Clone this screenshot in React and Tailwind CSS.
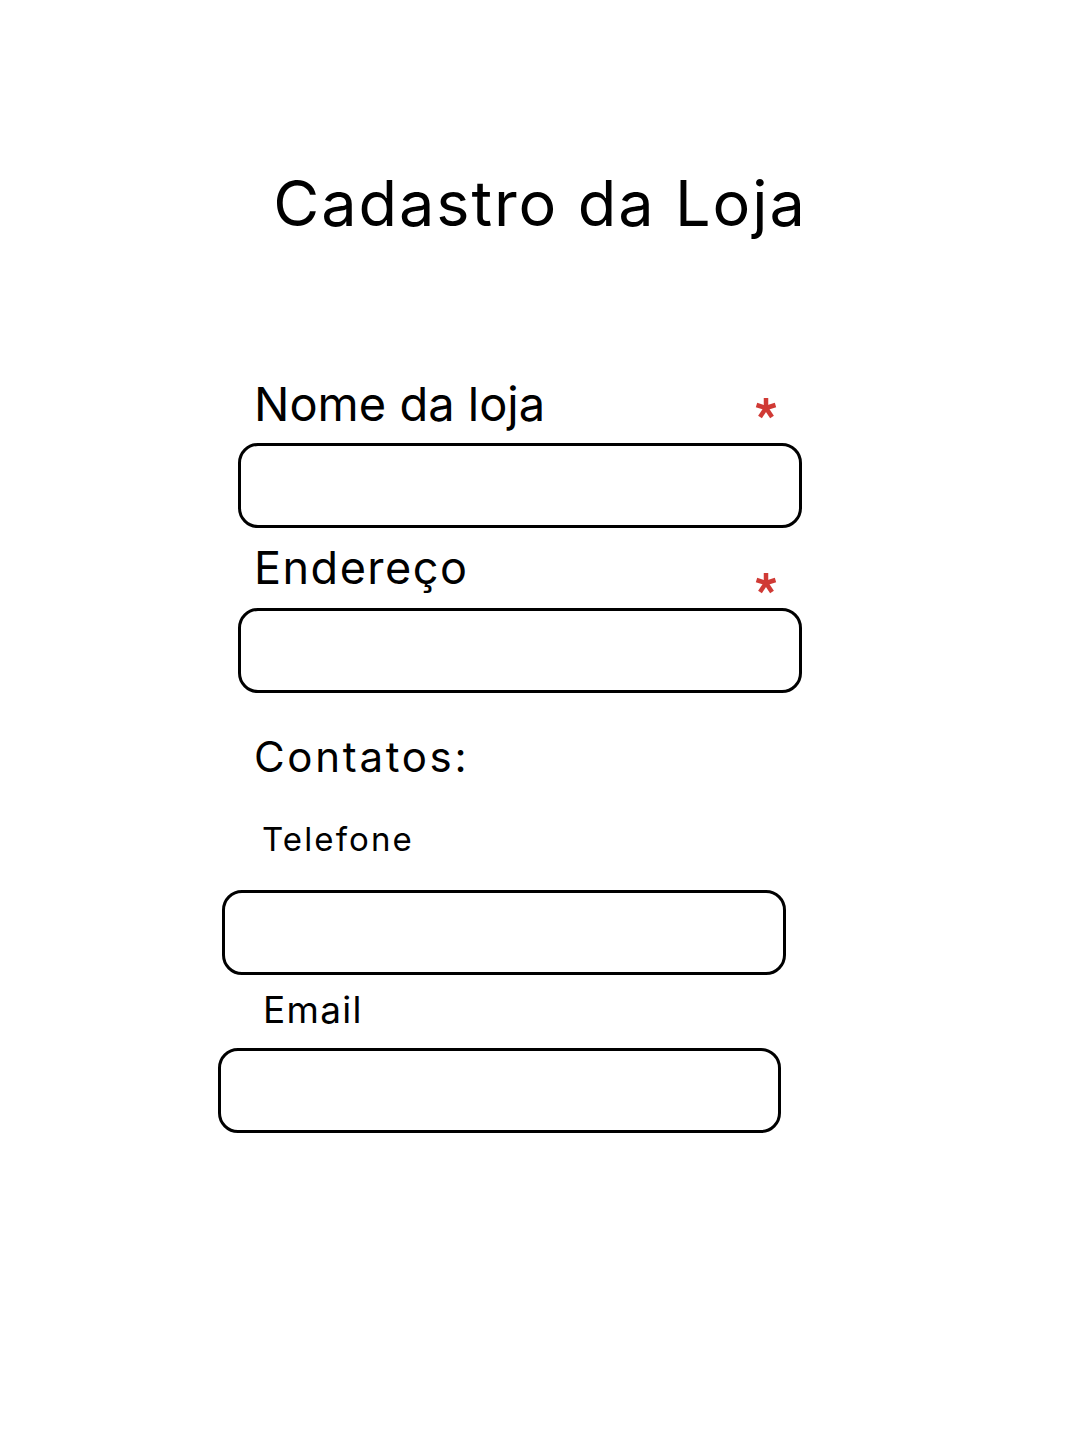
import React from 'react';

const Star = () => (
  <svg width="22" height="22" viewBox="0 0 22 22" className="block">
    <g stroke="#d03a35" strokeWidth="4.5" strokeLinecap="butt">
      <line x1="11" y1="11" x2="11" y2="1" />
      <line x1="11" y1="11" x2="20.5" y2="8" />
      <line x1="11" y1="11" x2="17" y2="20" />
      <line x1="11" y1="11" x2="5" y2="20" />
      <line x1="11" y1="11" x2="1.5" y2="8" />
    </g>
  </svg>
);

const Box = ({ className = '' }) => (
  <div className={`h-[85px] rounded-[20px] border-[3px] border-black bg-white ${className}`} />
);

export default function App() {
  return (
    <div className="w-[1080px] h-[1440px] bg-white text-black font-['Inter',sans-serif]">
      <h1 className="pt-[172px] text-center text-[63px] leading-none font-normal tracking-[0.03em]">Cadastro da Loja</h1>

      <div className="ml-[238px] w-[564px]">
        {/* campos obrigatórios */}
        <div className="mt-[145px] flex items-start justify-between">
          <span className="ml-[16px] text-[47px] leading-none">Nome da loja</span>
          <span className="h-0 mt-[17px] mr-[25px]"><Star /></span>
        </div>
        <Box className="mt-[16px]" />

        <div className="mt-[17px] flex items-start justify-between">
          <span className="ml-[16px] text-[45px] leading-none tracking-[0.033em]">Endereço</span>
          <span className="h-0 mt-[27px] mr-[25px]"><Star /></span>
        </div>
        <Box className="mt-[18px]" />

        <div className="mt-[43px] ml-[16px] text-[42px] leading-none tracking-[0.064em]">Contatos:</div>
      </div>

      <div className="mt-[45px] ml-[262px] text-[33px] leading-none tracking-[0.064em]">Telefone</div>
      <Box className="mt-[34px] ml-[222px] w-[564px]" />

      <div className="mt-[16px] ml-[263px] text-[37px] leading-none tracking-[0.035em]">Email</div>
      <Box className="mt-[20px] ml-[218px] w-[563px]" />
    </div>
  );
}
